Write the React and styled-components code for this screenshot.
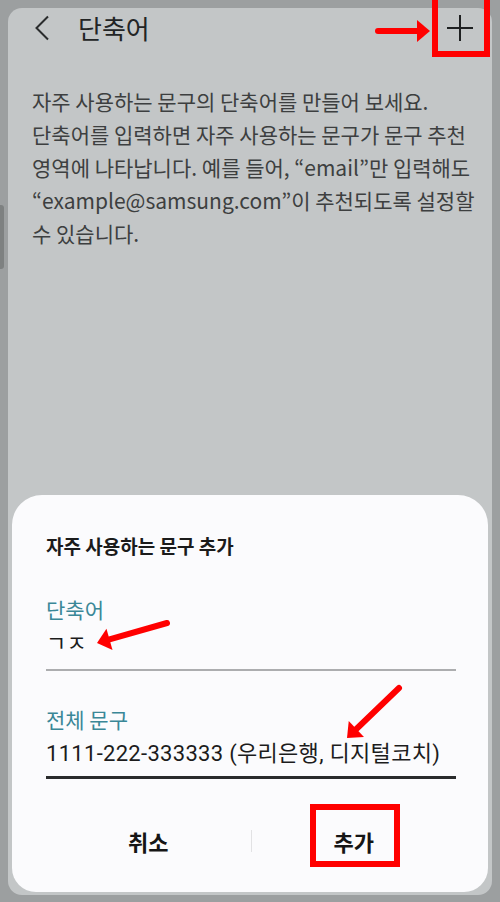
import React from "react";
import styled, { createGlobalStyle } from "styled-components";

const Global = createGlobalStyle`
  html, body { margin: 0; padding: 0; background: #9c9fa0; }
  body { font-family: "Noto Sans CJK KR", "Noto Sans", sans-serif; }
  * { box-sizing: border-box; }
`;

const Root = styled.div`
  position: relative;
  width: 500px;
  height: 902px;
  padding: 8px 8px 7px 8px;
  display: flex;
`;

const Screen = styled.div`
  flex: 1;
  background: #c3c6c7;
  border-radius: 14px;
  display: flex;
  flex-direction: column;
  overflow: hidden;
`;

const Header = styled.div`
  height: 40px;
  display: flex;
  align-items: center;
  padding-left: 26px;
  padding-right: 19px;
`;

const BackBtn = styled.div`
  width: 16px;
  height: 26px;
  display: flex;
  align-items: center;
`;

const Title = styled.div`
  margin-left: 28px;
  font-size: 26px;
  color: #222425;
  flex: 1;
  line-height: 40px;
`;

const PlusBtn = styled.div`
  width: 26px;
  height: 26px;
  display: flex;
`;

const Desc = styled.p`
  margin: 37px 0 0 0;
  padding: 0 12px 0 24px;
  font-size: 21px;
  line-height: 33px;
  color: #3d3f40;
  letter-spacing: 0;
  white-space: nowrap;
`;

const Spacer = styled.div`
  flex: 1;
`;

const Dialog = styled.div`
  margin: 0 4px 3px 4px;
  background: #fbfbfd;
  border-radius: 30px 30px 24px 24px;
  padding: 39px 32px 21px 34px;
  display: flex;
  flex-direction: column;
`;

const DialogTitle = styled.div`
  font-size: 19px;
  line-height: 24px;
  font-weight: 700;
  color: #1b1b1b;
`;

const Field = styled.div`
  margin-top: ${(p) => p.$gap}px;
  display: flex;
  flex-direction: column;
  border-bottom: ${(p) => (p.$active ? "3px solid #2a2b2c" : "2px solid #acadaf")};
  padding-bottom: ${(p) => p.$pb}px;
`;

const Label = styled.div`
  font-size: 21px;
  line-height: 28px;
  color: #3a8797;
`;

const Value = styled.div`
  margin-top: 7px;
  font-family: Roboto, "Noto Sans CJK KR", sans-serif;
  font-size: 22px;
  line-height: 28px;
  color: #1c1c1c;
  letter-spacing: 0.3px;
  white-space: nowrap;
`;

const Buttons = styled.div`
  margin-top: 32px;
  height: 60px;
  display: flex;
  align-items: center;
`;

const Btn = styled.div`
  flex: 1;
  text-align: center;
  font-size: 22px;
  font-weight: 700;
  color: #151515;
`;

const Divider = styled.div`
  width: 1px;
  height: 22px;
  background: #e2e2e4;
`;

const Overlay = styled.div`
  position: absolute;
  left: ${(p) => p.$x}px;
  top: ${(p) => p.$y}px;
  width: ${(p) => p.$w}px;
  height: ${(p) => p.$h}px;
  pointer-events: none;
`;

const RedBox = styled(Overlay)`
  border: 6px solid #ff0000;
`;

const EdgeBar = styled(Overlay)`
  background: #7e8181;
  border-radius: 0 3px 3px 0;
`;

function Arrow({ x1, y1, x2, y2 }) {
  const minX = Math.min(x1, x2) - 14;
  const minY = Math.min(y1, y2) - 14;
  const w = Math.abs(x2 - x1) + 28;
  const h = Math.abs(y2 - y1) + 28;
  const ax1 = x1 - minX, ay1 = y1 - minY, ax2 = x2 - minX, ay2 = y2 - minY;
  const dx = ax2 - ax1, dy = ay2 - ay1;
  const len = Math.hypot(dx, dy);
  const ux = dx / len, uy = dy / len;
  const head = 13;
  const half = 11;
  const bx = ax2 - ux * head, by = ay2 - uy * head;
  const px = -uy, py = ux;
  return (
    <Overlay $x={minX} $y={minY} $w={w} $h={h}>
      <svg width={w} height={h}>
        <line x1={ax1} y1={ay1} x2={bx} y2={by} stroke="#ff0000" strokeWidth="6" strokeLinecap="round" />
        <polygon
          points={`${ax2},${ay2} ${bx + px * half},${by + py * half} ${bx - px * half},${by - py * half}`}
          fill="#ff0000"
        />
      </svg>
    </Overlay>
  );
}

export default function App() {
  return (
    <>
      <Global />
      <Root>
        <Screen>
          <Header>
            <BackBtn>
              <svg width="16" height="26" viewBox="0 0 16 26">
                <polyline points="14,1.5 2.5,13 14,24.5" fill="none" stroke="#2a2c2d" strokeWidth="2" />
              </svg>
            </BackBtn>
            <Title>단축어</Title>
            <PlusBtn>
              <svg width="26" height="26" viewBox="0 0 26 26">
                <path d="M13 0 V26 M0 13 H26" stroke="#1e2021" strokeWidth="2" />
              </svg>
            </PlusBtn>
          </Header>
          <Desc>
            자주 사용하는 문구의 단축어를 만들어 보세요.
            <br />
            단축어를 입력하면 자주 사용하는 문구가 문구 추천
            <br />
            영역에 나타납니다. 예를 들어, “email”만 입력해도
            <br />
            “example@samsung.com”이 추천되도록 설정할
            <br />수 있습니다.
          </Desc>
          <Spacer />
          <Dialog>
            <DialogTitle>자주 사용하는 문구 추가</DialogTitle>
            <Field $gap={37} $pb={11}>
              <Label>단축어</Label>
              <Value>ㄱㅈ</Value>
            </Field>
            <Field $gap={34} $pb={8} $active>
              <Label>전체 문구</Label>
              <Value>1111-222-333333 (우리은행, 디지털코치)</Value>
            </Field>
            <Buttons>
              <Btn>취소</Btn>
              <Divider />
              <Btn>추가</Btn>
            </Buttons>
          </Dialog>
        </Screen>
        <EdgeBar $x={0} $y={205} $w={4} $h={64} />
        <RedBox $x={432} $y={-6} $w={58} $h={63} />
        <RedBox $x={310} $y={804} $w={90} $h={63} />
        <Arrow x1={378} y1={31} x2={430} y2={31} />
        <Arrow x1={167} y1={623} x2={97} y2={643} />
        <Arrow x1={399} y1={688} x2={347} y2={738} />
      </Root>
    </>
  );
}
